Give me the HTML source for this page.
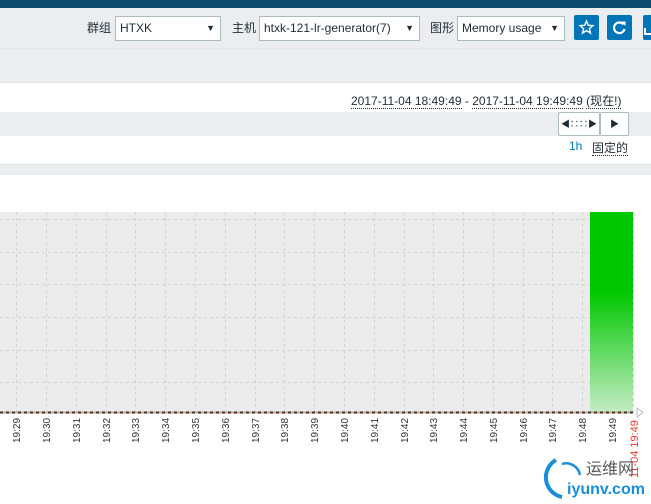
<!DOCTYPE html>
<html><head><meta charset="utf-8"><style>
*{margin:0;padding:0;box-sizing:border-box}
body{width:651px;height:504px;overflow:hidden;background:#fff;font-family:"Liberation Sans","Noto Sans CJK SC",sans-serif;font-size:12px;color:#1f2c33;position:relative}
.a{position:absolute}
.sel{position:absolute;top:16px;height:25px;border:1px solid #acbbc2;background:#fff;font-size:12px;line-height:23px;padding-left:4px;color:#1f2c33}
.sel:after{content:"▼";position:absolute;right:5px;top:0;font-size:9px}
.lbl{position:absolute;top:19px;font-size:12px}
.btn{position:absolute;top:15px;width:25px;height:25px;background:#0275b8;border-radius:2px}
.dot{border-bottom:1px dotted #1f2c33}
</style></head><body>
<div class="a" style="left:0;top:0;width:651px;height:8px;background:#0d4a6e"></div>
<div class="a" style="left:0;top:8px;width:651px;height:40px;background:#ebeef0"></div>
<div class="a" style="left:0;top:48px;width:651px;height:1px;background:#dfe4e7"></div>
<div class="a" style="left:0;top:49px;width:651px;height:33px;background:#ebeef0"></div>
<div class="a" style="left:0;top:82px;width:651px;height:1px;background:#dfe4e7"></div>
<div class="a" style="left:0;top:112px;width:651px;height:24px;background:#ebeef0"></div>
<div class="a" style="left:0;top:164px;width:651px;height:11px;background:#ebeef0;border-top:1px solid #dfe4e7"></div>

<div class="lbl" style="left:87px">群组</div>
<div class="sel" style="left:115px;width:106px">HTXK</div>
<div class="lbl" style="left:232px">主机</div>
<div class="sel" style="left:259px;width:161px">htxk-121-lr-generator(7)</div>
<div class="lbl" style="left:430px">图形</div>
<div class="sel" style="left:457px;width:108px">Memory usage</div>
<div class="btn" style="left:574px"><svg width="25" height="25" viewBox="0 0 25 25"><path d="M12.5 6l1.8 4.3 4.6.3-3.5 3 1.1 4.5-4-2.5-4 2.5 1.1-4.5-3.5-3 4.6-.3z" fill="none" stroke="#fff" stroke-width="1.4"/></svg></div>
<div class="btn" style="left:607px"><svg width="25" height="25" viewBox="0 0 25 25"><path d="M16.5 9.5A5.3 5.3 0 1 0 17.5 14" fill="none" stroke="#fff" stroke-width="2.2"/><path d="M14 6.5h4.5V11z" fill="#fff"/></svg></div>
<div class="btn" style="left:643px"><svg width="10" height="25"><path d="M2 13v6h6" fill="none" stroke="#fff" stroke-width="2"/></svg></div>

<div class="a" style="left:351px;top:92px;font-size:12px"><span class="dot">2017-11-04 18:49:49</span> - <span class="dot">2017-11-04 19:49:49</span> <span class="dot">(现在!)</span></div>
<div class="a" style="left:558px;top:112px;width:42px;height:24px;border:1px solid #acbbc2;background:#fff;border-radius:2px;text-align:center;line-height:22px;font-size:9px">◀∷∷▶</div>
<div class="a" style="left:600px;top:112px;width:29px;height:24px;border:1px solid #acbbc2;background:#fff;border-radius:2px;text-align:center;line-height:22px;font-size:9px">▶</div>
<div class="a" style="left:569px;top:139px;color:#0275b8">1h</div>
<div class="a" style="left:592px;top:139px"><span class="dot">固定的</span></div>

<svg class="a" style="left:0;top:0" width="651" height="504">
<rect x="0" y="212" width="633" height="201" fill="#ebebeb"/>
<g stroke="#cdd3d8" stroke-dasharray="3,3" stroke-width="1">
<line x1="0" x2="633" y1="219.5" y2="219.5"/><line x1="0" x2="633" y1="252.5" y2="252.5"/><line x1="0" x2="633" y1="284.5" y2="284.5"/><line x1="0" x2="633" y1="317.5" y2="317.5"/><line x1="0" x2="633" y1="350.5" y2="350.5"/><line x1="0" x2="633" y1="382.5" y2="382.5"/>
<line x1="16.5" x2="16.5" y1="212" y2="412"/><line x1="46.5" x2="46.5" y1="212" y2="412"/><line x1="76.5" x2="76.5" y1="212" y2="412"/><line x1="106.5" x2="106.5" y1="212" y2="412"/><line x1="135.5" x2="135.5" y1="212" y2="412"/><line x1="165.5" x2="165.5" y1="212" y2="412"/><line x1="195.5" x2="195.5" y1="212" y2="412"/><line x1="225.5" x2="225.5" y1="212" y2="412"/><line x1="255.5" x2="255.5" y1="212" y2="412"/><line x1="284.5" x2="284.5" y1="212" y2="412"/><line x1="314.5" x2="314.5" y1="212" y2="412"/><line x1="344.5" x2="344.5" y1="212" y2="412"/><line x1="374.5" x2="374.5" y1="212" y2="412"/><line x1="404.5" x2="404.5" y1="212" y2="412"/><line x1="433.5" x2="433.5" y1="212" y2="412"/><line x1="463.5" x2="463.5" y1="212" y2="412"/><line x1="493.5" x2="493.5" y1="212" y2="412"/><line x1="523.5" x2="523.5" y1="212" y2="412"/><line x1="552.5" x2="552.5" y1="212" y2="412"/><line x1="582.5" x2="582.5" y1="212" y2="412"/><line x1="633.5" x2="633.5" y1="212" y2="412"/>
</g>
<defs><linearGradient id="g" x1="0" y1="0" x2="0" y2="1"><stop offset="0.4" stop-color="#00c800"/><stop offset="1" stop-color="#c6ecc6"/></linearGradient></defs>
<rect x="590" y="212" width="43" height="201" fill="url(#g)"/>
<line x1="0" x2="633" y1="412.5" y2="412.5" stroke="#e8a070" stroke-width="2"/>
<line x1="0" x2="633" y1="412.5" y2="412.5" stroke="#333" stroke-width="2" stroke-dasharray="3,3"/>
<path d="M637 408l6 4.5-6 4.5z" fill="none" stroke="#bbb"/>
<g font-family="Liberation Sans,sans-serif" font-size="10" fill="#333">
<text transform="translate(20,443) rotate(-90)">19:29</text><text transform="translate(50,443) rotate(-90)">19:30</text><text transform="translate(80,443) rotate(-90)">19:31</text><text transform="translate(110,443) rotate(-90)">19:32</text><text transform="translate(139,443) rotate(-90)">19:33</text><text transform="translate(169,443) rotate(-90)">19:34</text><text transform="translate(199,443) rotate(-90)">19:35</text><text transform="translate(229,443) rotate(-90)">19:36</text><text transform="translate(259,443) rotate(-90)">19:37</text><text transform="translate(288,443) rotate(-90)">19:38</text><text transform="translate(318,443) rotate(-90)">19:39</text><text transform="translate(348,443) rotate(-90)">19:40</text><text transform="translate(378,443) rotate(-90)">19:41</text><text transform="translate(408,443) rotate(-90)">19:42</text><text transform="translate(437,443) rotate(-90)">19:43</text><text transform="translate(467,443) rotate(-90)">19:44</text><text transform="translate(497,443) rotate(-90)">19:45</text><text transform="translate(527,443) rotate(-90)">19:46</text><text transform="translate(556,443) rotate(-90)">19:47</text><text transform="translate(586,443) rotate(-90)">19:48</text><text transform="translate(616,443) rotate(-90)">19:49</text>
<text transform="translate(638,478) rotate(-90)" fill="#e33" font-size="11">11-04 19:49</text>
</g>
<path d="M556 460a20 20 0 0 0 6 37" fill="none" stroke="#1a8fd8" stroke-width="4"/>
<path d="M562 464a14 14 0 0 1 18 11" fill="none" stroke="#1a8fd8" stroke-width="2.5"/>
<text x="586" y="474" font-family="Noto Sans CJK SC,sans-serif" font-size="16" fill="#555">运维网</text>
<text x="567" y="494" font-family="Liberation Sans,sans-serif" font-size="16" font-weight="bold" fill="#1a8fd8">iyunv.com</text>
</svg>
</body></html>
